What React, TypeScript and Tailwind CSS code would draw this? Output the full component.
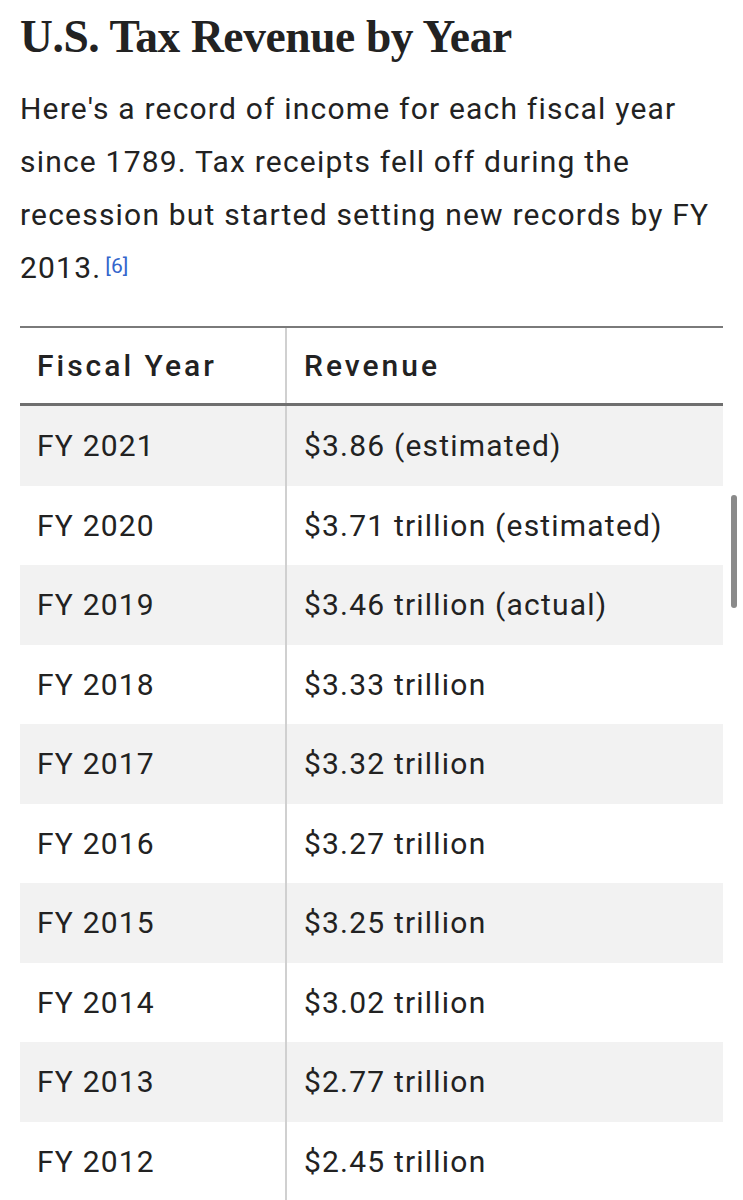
const ROWS: [string, string][] = [
  ['FY 2021', '$3.86 (estimated)'],
  ['FY 2020', '$3.71 trillion (estimated)'],
  ['FY 2019', '$3.46 trillion (actual)'],
  ['FY 2018', '$3.33 trillion'],
  ['FY 2017', '$3.32 trillion'],
  ['FY 2016', '$3.27 trillion'],
  ['FY 2015', '$3.25 trillion'],
  ['FY 2014', '$3.02 trillion'],
  ['FY 2013', '$2.77 trillion'],
  ['FY 2012', '$2.45 trillion'],
]

export default function App() {
  return (
    <div className="relative h-[1200px] overflow-hidden bg-white text-[#222] font-['Roboto',sans-serif]">
      <div className="px-5 pt-[10px]">
        <h1 className="font-['Liberation_Serif',serif] font-bold text-[45.5px] leading-[54px] tracking-[-0.4px] text-[#222]">
          U.S. Tax Revenue by Year
        </h1>
        <p className="mt-[18px] text-[30px] leading-[53px] tracking-[1.2px]">
          Here's a record of income for each fiscal year since 1789. Tax receipts fell off during the
          recession but started setting new records by FY 2013.
          <sup className="ml-1 text-[21px] tracking-normal text-[#3366cc] relative -top-[5px]">[6]</sup>
        </p>

        <div className="mt-[32px] border-t-2 border-[#7a7a7a]">
          <div className="flex h-[78px] border-b-[3px] border-[#6f6f6f]">
            <div className="w-[267px] shrink-0 border-r-2 border-[#d0d0d0] pl-[17px] flex items-center text-[30px] font-medium tracking-[3px]">
              Fiscal Year
            </div>
            <div className="flex-1 pl-[17px] flex items-center text-[30px] font-medium tracking-[3px]">
              Revenue
            </div>
          </div>
          {ROWS.map(([year, rev], i) => (
            <div key={year} className={`flex h-[79.5px] ${i % 2 === 0 ? 'bg-[#f2f2f2]' : 'bg-white'}`}>
              <div className="w-[267px] shrink-0 border-r-2 border-[#d0d0d0] pl-[17px] flex items-center text-[30px] tracking-[1.2px]">
                {year}
              </div>
              <div className="flex-1 pl-[17px] flex items-center text-[30px] tracking-[1.2px]">{rev}</div>
            </div>
          ))}
        </div>
      </div>

      {/* overlay scrollbar */}
      <div className="absolute right-[6px] top-[495px] w-[6px] h-[113px] rounded-full bg-[#8a8a8a]" />
    </div>
  )
}
